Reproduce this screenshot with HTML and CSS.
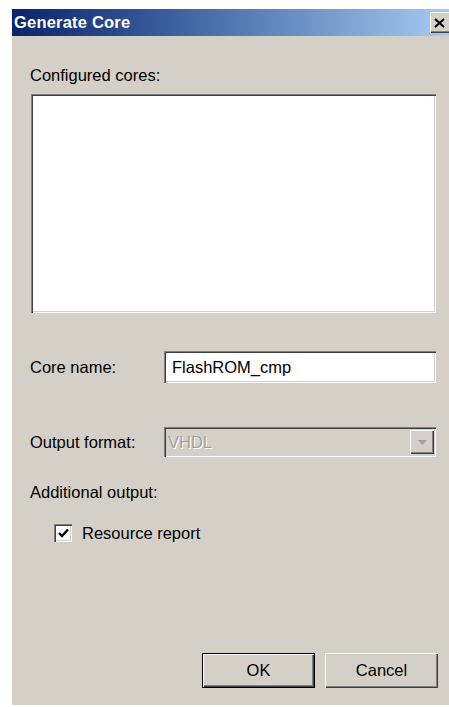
FILE: index.html
```html
<!DOCTYPE html>
<html lang="en">
<head>
<meta charset="utf-8">
<title>Generate Core</title>
<link rel="stylesheet" href="styles.css">
</head>
<body>
<div class="dialog">
  <div class="titlebar">
    <span class="title">Generate Core</span>
    <button class="close" aria-label="Close">
      <svg width="11" height="10" viewBox="0 0 11 10"><path d="M1 1 L10 9 M10 1 L1 9" stroke="#000" stroke-width="2" fill="none"/></svg>
    </button>
  </div>
  <div class="body">
    <div class="label first">Configured cores:</div>
    <div class="listbox sunken"></div>

    <div class="row name-row">
      <span class="row-label">Core name:</span>
      <div class="textbox sunken">FlashROM_cmp</div>
    </div>

    <div class="row format-row">
      <span class="row-label">Output format:</span>
      <div class="combo sunken">
        <span class="combo-text">VHDL</span>
        <span class="combo-btn">
          <svg width="9" height="5" viewBox="0 0 9 5"><path d="M0 0 H9 L4.5 5 Z" fill="#a0a0a0"/></svg>
        </span>
      </div>
    </div>

    <div class="label extra">Additional output:</div>
    <label class="check-row">
      <span class="checkbox sunken">
        <svg width="11" height="10" viewBox="0 0 11 10"><path d="M1 5 L4 8 L10 1.5" stroke="#000" stroke-width="2.4" fill="none"/></svg>
      </span>
      <span>Resource report</span>
    </label>

    <div class="buttons">
      <button class="btn default">OK</button>
      <button class="btn">Cancel</button>
    </div>
  </div>
</div>
</body>
</html>
```

FILE: styles.css
```css
html, body {
  margin: 0;
  padding: 0;
  background: #ffffff;
  overflow: hidden;
}

body {
  font-family: "Liberation Sans", Arial, sans-serif;
  font-size: 16.5px;
  color: #000;
}

/* dialog window runs off the right edge of the view */
.dialog {
  margin: 9px 0 0 12px;
  height: 696px;
  background: #d4d0c8;
  display: flex;
  flex-direction: column;
  overflow: hidden;
}

.titlebar {
  height: 27px;
  flex: none;
  background: linear-gradient(to right, #0a246a 0%, #3a5c9c 35%, #a6caf0 100%);
  display: flex;
  align-items: center;
  justify-content: space-between;
}

.title {
  color: #fff;
  font-weight: bold;
  font-size: 16.5px;
  padding-left: 2px;
  letter-spacing: 0.2px;
}

.close {
  flex: none;
  width: 21px;
  height: 21px;
  padding: 0 2px 0 0;
  margin: 0 -2px 0 0;
  background: #d4d0c8;
  border: none;
  box-shadow: inset 1px 1px 0 #fff, inset -1px -1px 0 #404040, inset -2px -2px 0 #808080;
  display: flex;
  align-items: center;
  justify-content: center;
}

.body {
  flex: 1;
  display: flex;
  flex-direction: column;
  padding: 0 0 0 18px;
}

.sunken {
  background: #fff;
  box-shadow: inset 1px 1px 0 #808080, inset 2px 2px 0 #404040, inset -1px -1px 0 #fff, inset -2px -2px 0 #d4d0c8;
}

.label {
  line-height: 20px;
}

.label.first {
  margin-top: 29px;
}

.listbox {
  margin: 9px 0 0 1px;
  width: 405px;
  height: 219px;
}

.row {
  display: flex;
  align-items: center;
}

.row-label {
  width: 134px;
  flex: none;
}

.name-row {
  margin-top: 38px;
}

.textbox {
  width: 264px;
  height: 32px;
  padding-left: 8px;
  display: flex;
  align-items: center;
}

.format-row {
  margin-top: 44px;
}

.combo {
  width: 272px;
  height: 30px;
  background: #d4d0c8;
  display: flex;
  align-items: center;
  justify-content: space-between;
}

.combo-text {
  padding-left: 4px;
  color: #a0a0a0;
  text-shadow: 1px 1px 0 #fff;
}

.combo-btn {
  width: 24px;
  height: 24px;
  margin-right: 2px;
  background: #d4d0c8;
  box-shadow: inset 1px 1px 0 #fff, inset -1px -1px 0 #404040, inset -2px -2px 0 #808080;
  display: flex;
  align-items: center;
  justify-content: center;
}

.label.extra {
  margin-top: 25px;
}

.check-row {
  margin: 22px 0 0 24px;
  display: flex;
  align-items: center;
  gap: 10px;
  line-height: 18px;
}

.checkbox {
  width: 18px;
  height: 18px;
  display: flex;
  align-items: center;
  justify-content: center;
}

.buttons {
  margin-top: auto;
  margin-bottom: 17px;
  padding-left: 172px;
  display: flex;
  gap: 10px;
}

.btn {
  width: 113px;
  height: 35px;
  padding: 0;
  font-family: "Liberation Sans", Arial, sans-serif;
  font-size: 16.5px;
  color: #000;
  background: #d4d0c8;
  border: none;
  box-shadow: inset 1px 1px 0 #fff, inset -1px -1px 0 #404040, inset -2px -2px 0 #808080;
}

.btn.default {
  box-shadow: inset 0 0 0 1px #000, inset 2px 2px 0 #fff, inset -2px -2px 0 #404040, inset -3px -3px 0 #808080;
}
```
